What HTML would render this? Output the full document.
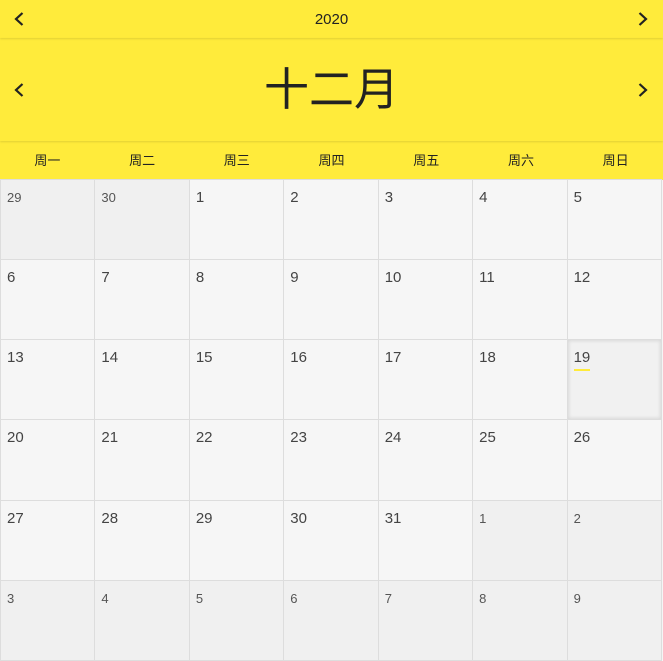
<!DOCTYPE html><html><head><meta charset="utf-8"><style>
body{margin:0;width:663px;height:660px;overflow:hidden;background:#f5f5f5;font-family:"Liberation Sans","Noto Sans CJK SC",sans-serif;color:#333}
.hd{position:absolute;left:0;top:0;width:663px;height:180px;background:#ffeb3b}
.yr{position:absolute;left:0;top:0;width:663px;height:38px;box-shadow:0 1px 2px rgba(0,0,0,.12);text-align:center;line-height:40px;font-size:15px;color:#222}
.mo{position:absolute;left:0;top:38px;width:663px;height:103px;box-shadow:0 1px 2px rgba(0,0,0,.12);text-align:center;line-height:104px;font-size:45px;color:#222}
.wk{position:absolute;left:0;top:142px;width:663px;height:38px;display:flex}
.wk div{flex:1;text-align:center;line-height:38px;font-size:13px;color:#222}
.ar{position:absolute;width:16px;height:16px}
.grid{position:absolute;left:0;top:179px;width:662px;height:482px;display:grid;grid-template-columns:repeat(7,1fr);grid-template-rows:repeat(6,1fr);gap:1px;background:#ddd;border:1px solid #ddd;box-sizing:border-box}
.grid div{background:#f6f6f6;font-size:15px;padding:9px 0 0 6px;color:#444;position:relative}
.grid div.o{background:#f0f0f0;font-size:13px;padding-top:10px;color:#555}
.grid div.t{background:#f1f1f1;box-shadow:inset 0 0 3px 1px #d8d8d8}
.grid div.t span{border-bottom:2px solid #ffeb3b;padding-bottom:3px}
</style></head><body>
<div class="hd">
<div class="yr">2020</div>
<div class="mo">十二月</div>
<div class="wk"><div>周一</div><div>周二</div><div>周三</div><div>周四</div><div>周五</div><div>周六</div><div>周日</div></div>
<svg class="ar" style="left:11px;top:11px" viewBox="0 0 16 16"><path d="M11.5 2 5 8l6.5 6" fill="none" stroke="#222" stroke-width="2.2"/></svg>
<svg class="ar" style="left:635px;top:11px" viewBox="0 0 16 16"><path d="M4.5 2 11 8l-6.5 6" fill="none" stroke="#222" stroke-width="2.2"/></svg>
<svg class="ar" style="left:11px;top:82px" viewBox="0 0 16 16"><path d="M11.5 2 5 8l6.5 6" fill="none" stroke="#222" stroke-width="2.2"/></svg>
<svg class="ar" style="left:635px;top:82px" viewBox="0 0 16 16"><path d="M4.5 2 11 8l-6.5 6" fill="none" stroke="#222" stroke-width="2.2"/></svg>
</div>
<div class="grid">
<div class="o">29</div><div class="o">30</div><div>1</div><div>2</div><div>3</div><div>4</div><div>5</div>
<div>6</div><div>7</div><div>8</div><div>9</div><div>10</div><div>11</div><div>12</div>
<div>13</div><div>14</div><div>15</div><div>16</div><div>17</div><div>18</div><div class="t"><span>19</span></div>
<div>20</div><div>21</div><div>22</div><div>23</div><div>24</div><div>25</div><div>26</div>
<div>27</div><div>28</div><div>29</div><div>30</div><div>31</div><div class="o">1</div><div class="o">2</div>
<div class="o">3</div><div class="o">4</div><div class="o">5</div><div class="o">6</div><div class="o">7</div><div class="o">8</div><div class="o">9</div>
</div>
</body></html>
